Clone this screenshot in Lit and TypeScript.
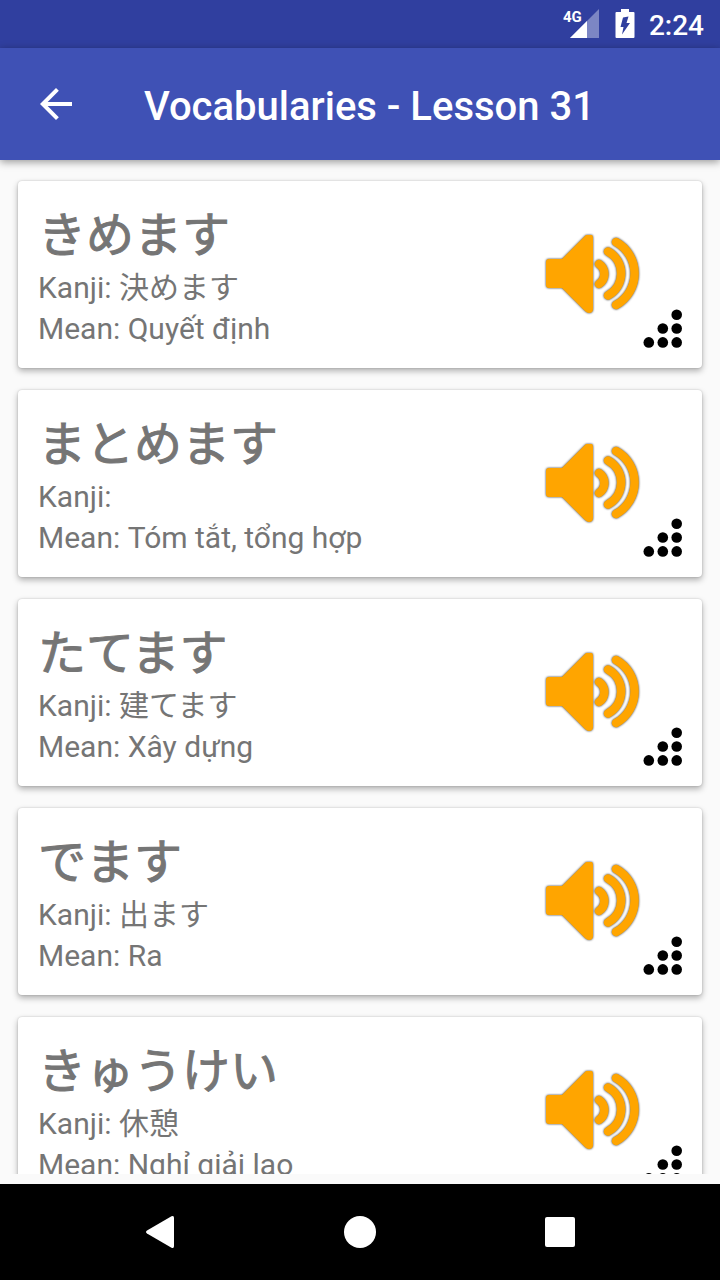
import { LitElement, html, css } from "lit";
import { customElement, property } from "lit/decorators.js";

interface Word {
  kana: string;
  kanji: string;
  mean: string;
}

const WORDS: Word[] = [
  { kana: "きめます", kanji: "決めます", mean: "Quyết định" },
  { kana: "まとめます", kanji: "", mean: "Tóm tắt, tổng hợp" },
  { kana: "たてます", kanji: "建てます", mean: "Xây dựng" },
  { kana: "でます", kanji: "出ます", mean: "Ra" },
  { kana: "きゅうけい", kanji: "休憩", mean: "Nghỉ giải lao" },
];

const buttonReset = css`
  button {
    display: flex;
    margin: 0;
    padding: 0;
    border: 0;
    background: none;
    color: inherit;
    font: inherit;
    cursor: pointer;
  }
  svg {
    display: block;
  }
`;

@customElement("status-bar")
export class StatusBar extends LitElement {
  static styles = css`
    :host {
      display: flex;
      justify-content: flex-end;
      align-items: center;
      flex: none;
      height: 48px;
      padding-right: 16px;
      background: #303f9f;
      color: #fff;
    }
    svg {
      display: block;
    }
    .network {
      font: 700 15px Roboto, sans-serif;
    }
    .battery {
      margin: 0 14px 0 16px;
    }
    .clock {
      font: 500 28px/32px Roboto, sans-serif;
      padding-top: 4px;
    }
  `;

  render() {
    return html`
      <svg width="36" height="30" viewBox="0 0 36 30" role="img" aria-label="4G signal">
        <path d="M36 0V29H7Z" fill="#7c86c4" />
        <path d="M24 12V29H7Z" fill="#fff" />
        <path d="M0 0H19V15H0Z" fill="#303f9f" />
        <text class="network" x="0" y="13" fill="#fff">4G</text>
      </svg>
      <svg class="battery" width="20" height="30" viewBox="0 0 20 30" role="img" aria-label="Charging">
        <path
          d="M6 0H14V3H18.500Q19.500 3 19.500 4V28Q19.500 29 18.500 29H1.500Q.5 29 .5 28V4Q.5 3 1.500 3H6Z"
          fill="#fff"
        />
        <path d="M8 8.500L13.500 7.500L11.500 14H15L7 25.500L8.500 18H5.500Z" fill="#303f9f" />
      </svg>
      <time class="clock">2:24</time>
    `;
  }
}

@customElement("title-bar")
export class TitleBar extends LitElement {
  @property() heading = "";

  static styles = [
    buttonReset,
    css`
      :host {
        display: flex;
        align-items: center;
        flex: none;
        gap: 64px;
        height: 112px;
        padding: 0 32px;
        background: #3f51b5;
        color: #fff;
        box-shadow: 0 2px 8px rgba(0, 0, 0, 0.4);
        z-index: 1;
      }
      h1 {
        margin: 0;
        padding-top: 6px;
        font: 500 40px/48px Roboto, sans-serif;
      }
    `,
  ];

  render() {
    return html`
      <button aria-label="Back">
        <svg width="48" height="48" viewBox="0 0 24 24">
          <path
            d="M20 11H7.830l5.590-5.590L12 4l-8 8 8 8 1.410-1.410L7.830 13H20v-2z"
            fill="currentColor"
          />
        </svg>
      </button>
      <h1>${this.heading}</h1>
    `;
  }
}

@customElement("word-card")
export class WordCard extends LitElement {
  @property({ attribute: false }) word!: Word;

  static styles = [
    buttonReset,
    css`
      :host {
        display: flex;
        flex: none;
        box-sizing: border-box;
        padding: 24px 19px 19px 20px;
        border-radius: 4px;
        background: #fff;
        color: #757575;
        box-shadow: 0 3px 6px rgba(0, 0, 0, 0.3), 0 0 2px rgba(0, 0, 0, 0.2);
      }
      .text {
        flex: 1;
        min-width: 0;
      }
      h2,
      p {
        margin: 0;
      }
      h2 {
        font: 400 48px/62px Roboto, "Noto Sans CJK JP", sans-serif;
        -webkit-text-stroke: 1px currentColor;
      }
      p {
        font: 400 30px/41px Roboto, "Noto Sans CJK JP", sans-serif;
      }
      .speak {
        align-self: center;
        filter: drop-shadow(0 0 1px #333);
      }
      .grip {
        align-self: flex-end;
        color: #000;
      }
    `,
  ];

  render() {
    const { kana, kanji, mean } = this.word;
    return html`
      <div class="text">
        <h2 lang="ja">${kana}</h2>
        <p>Kanji: <span lang="ja">${kanji}</span></p>
        <p>Mean: <span lang="vi">${mean}</span></p>
      </div>
      <button class="speak" aria-label="Play pronunciation">
        <svg width="100" height="84" viewBox="0 2 100 84">
          <path
            d="M6 26H19L42 3Q44 1 46 1Q50 1 50 5V76Q50 80 46 80Q44 80 42 78L19 55H6Q3 55 3 52V29Q3 26 6 26Z"
            fill="#ffa500"
          />
          <g fill="none" stroke="#ffa500" stroke-width="8.500" stroke-linecap="round">
            <path d="M56 31A12 12 0 0 1 56 51" />
            <path d="M65 18.500A25 25 0 0 1 65 62.500" />
            <path d="M73 9A36 36 0 0 1 73 72" />
          </g>
        </svg>
      </button>
      <button class="grip" aria-label="More">
        <svg width="40" height="40" viewBox="0 1 40 40" fill="currentColor">
          <circle cx="33.700" cy="6.700" r="5.300" />
          <circle cx="19.800" cy="20.500" r="5.300" />
          <circle cx="33.700" cy="20.500" r="5.300" />
          <circle cx="5.800" cy="34.400" r="5.300" />
          <circle cx="19.800" cy="34.400" r="5.300" />
          <circle cx="33.700" cy="34.400" r="5.300" />
        </svg>
      </button>
    `;
  }
}

@customElement("navigation-bar")
export class NavigationBar extends LitElement {
  static styles = [
    buttonReset,
    css`
      :host {
        display: flex;
        justify-content: center;
        align-items: center;
        flex: none;
        gap: 152px;
        height: 96px;
        background: #000;
        color: #fff;
      }
    `,
  ];

  render() {
    return html`
      <button aria-label="Back">
        <svg width="48" height="48" viewBox="0 0 48 48" fill="currentColor">
          <path d="M11 22.500L35.500 8.300Q38 7 38 10V38Q38 41 35.500 39.700L11 25.500Q9 24 11 22.500Z" />
        </svg>
      </button>
      <button aria-label="Home">
        <svg width="48" height="48" viewBox="0 0 48 48" fill="currentColor">
          <circle cx="24" cy="24" r="16" />
        </svg>
      </button>
      <button aria-label="Overview">
        <svg width="48" height="48" viewBox="0 0 48 48" fill="currentColor">
          <rect x="9" y="9" width="30" height="30" rx="2" />
        </svg>
      </button>
    `;
  }
}

@customElement("app-root")
export class AppRoot extends LitElement {
  static styles = css`
    :host {
      display: flex;
      flex-direction: column;
      height: 100vh;
      background: #fafafa;
    }
    main {
      display: flex;
      flex-direction: column;
      flex: 1;
      gap: 22px;
      min-height: 0;
      margin-bottom: 10px;
      padding: 21px 18px 0;
      overflow-y: auto;
      scrollbar-width: none;
    }
  `;

  render() {
    return html`
      <status-bar></status-bar>
      <title-bar heading="Vocabularies - Lesson 31"></title-bar>
      <main>${WORDS.map((word) => html`<word-card .word=${word}></word-card>`)}</main>
      <navigation-bar></navigation-bar>
    `;
  }
}
